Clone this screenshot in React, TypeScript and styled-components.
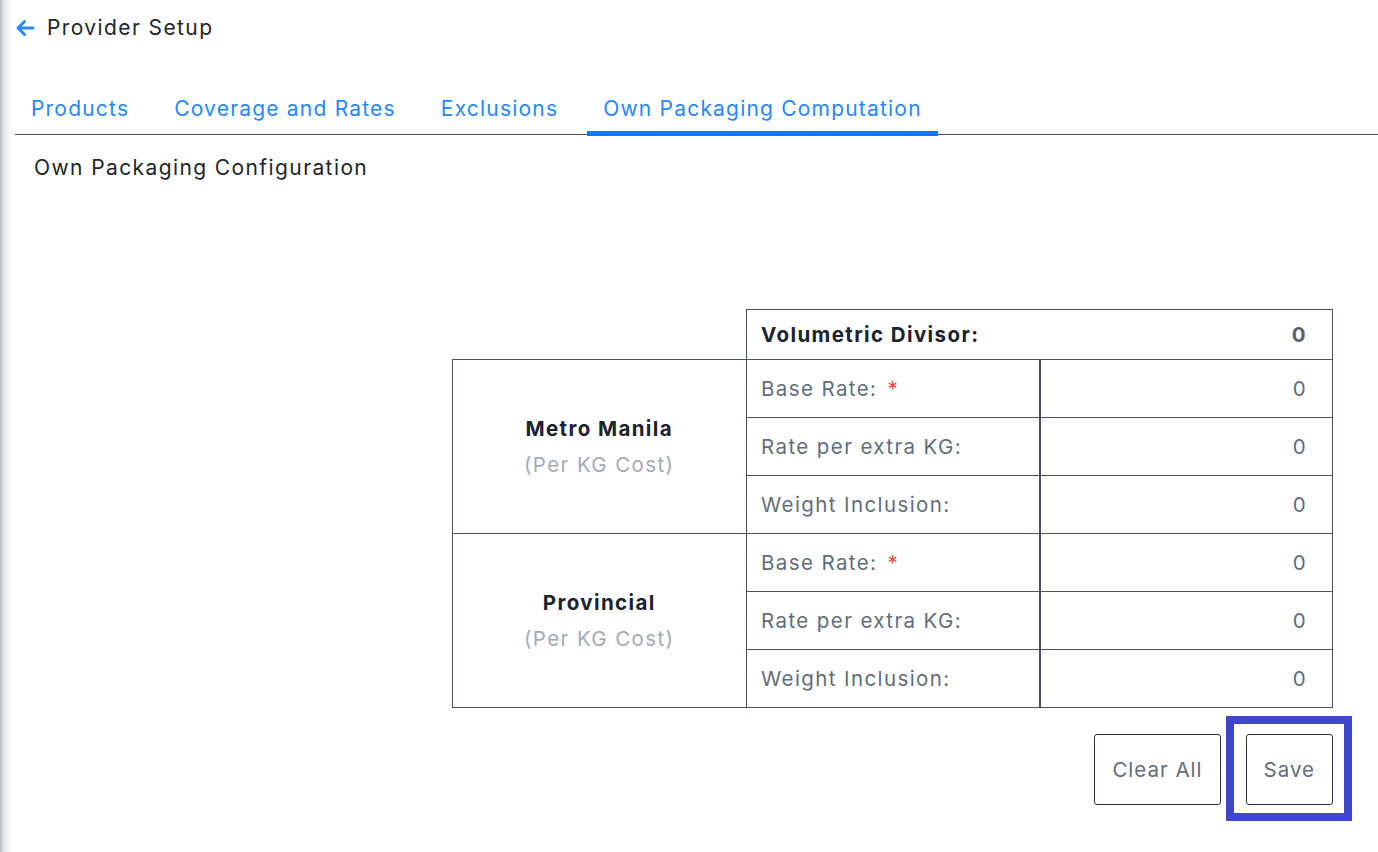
import React, { useState } from 'react';
import styled, { createGlobalStyle } from 'styled-components';

const GlobalStyle = createGlobalStyle`
    html, body {
        margin: 0;
        padding: 0;
        background: #ffffff;
    }
    body {
        font-family: Inter, 'Open Sans', sans-serif;
        letter-spacing: 1.4px;
        line-height: 24px;
        color: #212529;
    }
`;

const Page = styled.div`
    min-height: 852px;
    box-sizing: border-box;
    padding: 0 0 0 15px;
    background: linear-gradient(to right, #b5b9c0 0px, #e4e6e9 4px, #ffffff 12px);
`;

const Header = styled.div`
    display: flex;
    align-items: center;
    gap: 12px;
    height: 56px;
    font-size: 21px;
    color: #212529;
`;

const BackButton = styled.button`
    display: flex;
    align-items: center;
    border: none;
    background: none;
    padding: 0;
    cursor: pointer;
`;

const TabBar = styled.div`
    display: flex;
    gap: 13px;
    margin-top: 25px;
    border-bottom: 1.5px solid #4a5260;
`;

const Tab = styled.button<{ $active?: boolean }>`
    font-family: inherit;
    letter-spacing: 1.2px;
    line-height: 24px;
    font-size: 21px;
    color: #2787ff;
    background: none;
    border: none;
    padding: 16px 16px 10px;
    margin-bottom: -2px;
    border-bottom: 5px solid ${(p) => (p.$active ? '#007bff' : 'transparent')};
    cursor: pointer;
`;

const SectionTitle = styled.div`
    font-size: 21px;
    color: #212529;
    padding: 21px 0 0 19px;
`;

const Body = styled.div`
    display: flex;
    flex-direction: column;
    align-items: flex-end;
    padding-right: 45px;
    margin-top: 129px;
`;

const RateTable = styled.table`
    border-collapse: collapse;
    font-size: 20.5px;
`;

const Cell = styled.td<{ $w?: number }>`
    border: 1.5px solid #4a5260;
    height: 58px;
    padding: 0 14px;
    box-sizing: border-box;
    width: ${(p) => (p.$w ? `${p.$w}px` : 'auto')};
    color: #626d7b;
`;

const EmptyCell = styled.td`
    border: none;
    width: 292px;
`;

const HeadCell = styled(Cell)`
    height: 50px;
    font-weight: 700;
    color: #1b2230;
`;

const HeadValue = styled.span`
    float: right;
    color: #5a6270;
    margin-right: 11px;
`;

const RegionCell = styled(Cell)`
    text-align: center;
    vertical-align: middle;
    width: 292px;
`;

const RegionName = styled.div`
    font-weight: 700;
    color: #1b2230;
    margin-bottom: 12px;
`;

const RegionNote = styled.div`
    color: #a3aab4;
`;

const ValueCell = styled(Cell)`
    text-align: right;
    padding-right: 25px;
    border-left-width: 2.5px;
`;

const Required = styled.span`
    color: #f0463c;
    margin-left: 10px;
`;

const Actions = styled.div`
    display: flex;
    gap: 25px;
    margin-top: 26px;
`;

const ActionButton = styled.button<{ $highlight?: boolean }>`
    position: relative;
    font-family: inherit;
    letter-spacing: 1px;
    font-size: 20.5px;
    color: #626d7b;
    background: #ffffff;
    border: 1.5px solid #27303d;
    border-radius: 3px;
    height: 71px;
    padding: 0 17px;
    cursor: pointer;

    &::after {
        content: '';
        display: ${(p) => (p.$highlight ? 'block' : 'none')};
        position: absolute;
        left: -20.5px;
        top: -19.5px;
        right: -19.5px;
        bottom: -16.5px;
        border: 8px solid #3f48cc;
    }
`;

const ArrowIcon = () => (
    <svg width="20" height="18" viewBox="0 0 20 18" fill="none">
        <path d="M18 9H3M9.5 2.5L3 9l6.5 6.5" stroke="#2787ff" strokeWidth="3" strokeLinecap="round" strokeLinejoin="round" />
    </svg>
);

interface Region {
    name: string;
    rates: { label: string; required?: boolean; value: number }[];
}

const regions: Region[] = [
    {
        name: 'Metro Manila',
        rates: [
            { label: 'Base Rate:', required: true, value: 0 },
            { label: 'Rate per extra KG:', value: 0 },
            { label: 'Weight Inclusion:', value: 0 },
        ],
    },
    {
        name: 'Provincial',
        rates: [
            { label: 'Base Rate:', required: true, value: 0 },
            { label: 'Rate per extra KG:', value: 0 },
            { label: 'Weight Inclusion:', value: 0 },
        ],
    },
];

const tabs = ['Products', 'Coverage and Rates', 'Exclusions', 'Own Packaging Computation'];

const App: React.FC = () => {
    const [active, setActive] = useState(3);

    return (
        <Page>
            <GlobalStyle />
            <Header>
                <BackButton>
                    <ArrowIcon />
                </BackButton>
                Provider Setup
            </Header>

            <TabBar>
                {tabs.map((t, i) => (
                    <Tab key={t} $active={i === active} onClick={() => setActive(i)}>
                        {t}
                    </Tab>
                ))}
            </TabBar>

            <SectionTitle>Own Packaging Configuration</SectionTitle>

            <Body>
                <RateTable>
                    <tbody>
                        <tr>
                            <EmptyCell />
                            <HeadCell colSpan={2}>
                                Volumetric Divisor:
                                <HeadValue>0</HeadValue>
                            </HeadCell>
                        </tr>
                        {regions.map((r) =>
                            r.rates.map((rate, i) => (
                                <tr key={r.name + rate.label}>
                                    {i === 0 && (
                                        <RegionCell rowSpan={3}>
                                            <RegionName>{r.name}</RegionName>
                                            <RegionNote>(Per KG Cost)</RegionNote>
                                        </RegionCell>
                                    )}
                                    <Cell $w={293}>
                                        {rate.label}
                                        {rate.required && <Required>*</Required>}
                                    </Cell>
                                    <ValueCell $w={293}>{rate.value}</ValueCell>
                                </tr>
                            ))
                        )}
                    </tbody>
                </RateTable>

                <Actions>
                    <ActionButton>Clear All</ActionButton>
                    <ActionButton $highlight>Save</ActionButton>
                </Actions>
            </Body>
        </Page>
    );
};

export default App;
